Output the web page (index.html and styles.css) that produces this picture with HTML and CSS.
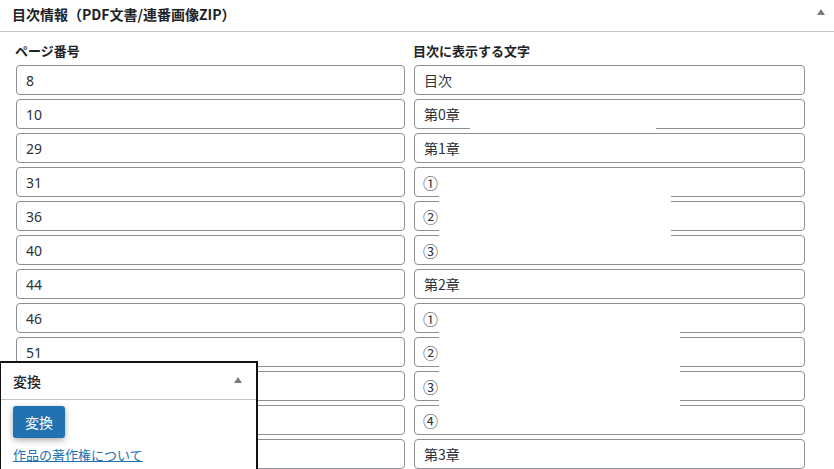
FILE: index.html
```html
<!DOCTYPE html>
<html lang="ja">
<head>
<meta charset="utf-8">
<title>目次情報</title>
<link rel="stylesheet" href="styles.css">
</head>
<body>
<div class="postbox">
  <div class="postbox-header">
    <h2 class="postbox-title">目次情報（PDF文書/連番画像ZIP）</h2>
    <span class="toggle-arrow"></span>
  </div>
  <div class="inside">
    <div class="toc-grid">
      <div class="col-label">ページ番号</div>
      <div class="col-label">目次に表示する文字</div>
      <input class="field" type="text" value="8"><input class="field label-field" type="text" value="目次">
      <input class="field" type="text" value="10"><input class="field label-field" type="text" value="第0章">
      <input class="field" type="text" value="29"><input class="field label-field" type="text" value="第1章">
      <input class="field" type="text" value="31"><input class="field label-field circled" type="text" value="①">
      <input class="field" type="text" value="36"><input class="field label-field circled" type="text" value="②">
      <input class="field" type="text" value="40"><input class="field label-field circled" type="text" value="③">
      <input class="field" type="text" value="44"><input class="field label-field" type="text" value="第2章">
      <input class="field" type="text" value="46"><input class="field label-field circled" type="text" value="①">
      <input class="field" type="text" value="51"><input class="field label-field circled" type="text" value="②">
      <input class="field" type="text" value="55"><input class="field label-field circled" type="text" value="③">
      <input class="field" type="text" value="60"><input class="field label-field circled" type="text" value="④">
      <input class="field" type="text" value="64"><input class="field label-field" type="text" value="第3章">
    </div>
  </div>
</div>

<div class="redact redact-1"></div>
<div class="redact redact-2"></div>
<div class="redact redact-3"></div>

<div class="convert-box">
  <div class="convert-header">
    <h2 class="convert-title">変換</h2>
    <span class="toggle-arrow small"></span>
  </div>
  <div class="convert-inside">
    <button class="convert-btn" type="button">変換</button>
    <a class="copyright-link" href="#">作品の著作権について</a>
  </div>
</div>
</body>
</html>
```

FILE: styles.css
```css
html, body {
  margin: 0;
  padding: 0;
  background: #ffffff;
  width: 834px;
  height: 469px;
  overflow: hidden;
}

body {
  position: relative;
  font-family: "Noto Sans", "Noto Sans CJK JP", sans-serif;
  color: #1d2327;
}

.postbox {
  height: 469px;
  overflow: hidden;
}

.postbox-header {
  display: flex;
  align-items: center;
  justify-content: space-between;
  height: 31px;
  border-bottom: 1px solid #c3c4c7;
  padding: 0 9px 0 12px;
  box-sizing: content-box;
}

.postbox-title {
  margin: 0;
  font-family: "Noto Sans CJK JP", sans-serif;
  font-size: 14px;
  font-weight: 600;
  line-height: 20px;
  color: #1d2327;
  position: relative;
  top: -2px;
}

.toggle-arrow {
  width: 0;
  height: 0;
  border-left: 4px solid transparent;
  border-right: 4px solid transparent;
  border-bottom: 6px solid #787c82;
  position: relative;
  top: -4px;
}

.inside {
  padding: 10px 29px 0 16px;
}

.toc-grid {
  display: grid;
  grid-template-columns: 389fr 391fr;
  column-gap: 9px;
  row-gap: 4px;
}

.col-label {
  font-family: "Noto Sans CJK JP", sans-serif;
  font-size: 13px;
  font-weight: 600;
  line-height: 18px;
  margin-left: -1px;
  margin-bottom: 1px;
  color: #1d2327;
}

.field {
  box-sizing: border-box;
  height: 30px;
  width: 100%;
  margin: 0;
  border: 1px solid #8c8f94;
  border-radius: 4px;
  padding: 0 9px;
  font-family: "Noto Sans", "Noto Sans CJK JP", sans-serif;
  font-size: 14px;
  color: #2c3338;
  background: #fff;
}

.label-field {
  font-family: "Noto Sans CJK JP", sans-serif;
}

.circled {
  font-size: 15px;
  padding-left: 8px;
}

.redact {
  position: absolute;
  background: #ffffff;
}

.redact-1 { left: 470px; top: 101px; width: 186px; height: 31px; }
.redact-2 { left: 439px; top: 170px; width: 232px; height: 93px; }
.redact-3 { left: 439px; top: 305px; width: 241px; height: 128px; }

.convert-box {
  position: absolute;
  left: -1px;
  top: 361px;
  width: 255px;
  height: 106px;
  border: 2px solid #111111;
  border-bottom: none;
  background: #ffffff;
  overflow: hidden;
}

.convert-header {
  display: flex;
  align-items: center;
  justify-content: space-between;
  height: 36px;
  border-bottom: 1px solid #c3c4c7;
  padding: 0 14px 0 12px;
}

.convert-title {
  margin: 0;
  font-family: "Noto Sans CJK JP", sans-serif;
  font-size: 14px;
  font-weight: 500;
  line-height: 20px;
  color: #1d2327;
}

.toggle-arrow.small {
  top: -1px;
}

.convert-inside {
  padding: 6px 12px 0 12px;
  display: flex;
  flex-direction: column;
  align-items: flex-start;
}

.convert-btn {
  width: 52px;
  height: 32px;
  border: none;
  border-radius: 3px;
  background: #2271b1;
  color: #ffffff;
  font-family: "Noto Sans CJK JP", sans-serif;
  font-size: 14px;
  padding: 0;
  box-shadow: 0 2px 6px rgba(0, 0, 0, 0.35);
}

.copyright-link {
  margin-top: 8px;
  font-family: "Noto Sans CJK JP", sans-serif;
  font-size: 13px;
  line-height: 18px;
  color: #2271b1;
  text-decoration: underline;
}
```
